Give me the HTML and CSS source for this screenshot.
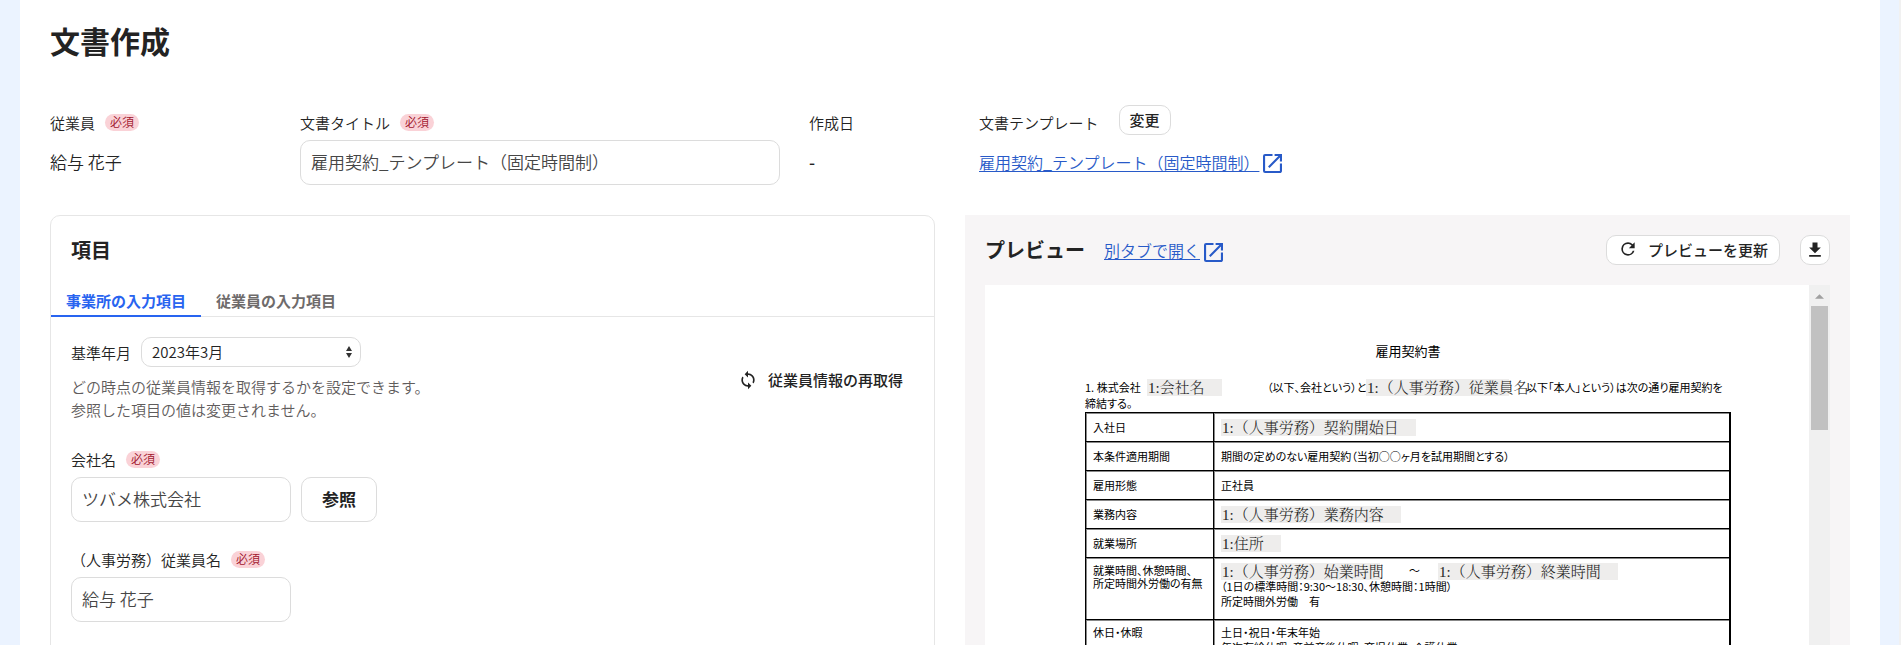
FILE: index.html
```html
<!DOCTYPE html>
<html lang="ja">
<head>
<meta charset="utf-8">
<title>文書作成</title>
<link rel="stylesheet" href="styles.css">
</head>
<body>
<div class="app">
  <main class="page">
    <h1 class="page-title">文書作成</h1>

    <section class="meta">
      <div class="meta-item">
        <div class="label-row"><span class="label">従業員</span><span class="badge">必須</span></div>
        <div class="value">給与 花子</div>
      </div>
      <div class="meta-item">
        <div class="label-row"><label class="label" for="doc-title">文書タイトル</label><span class="badge">必須</span></div>
        <input class="input input-title" id="doc-title" type="text" value="雇用契約_テンプレート（固定時間制）">
      </div>
      <div class="meta-item">
        <div class="label-row"><span class="label">作成日</span></div>
        <div class="value value-date">-</div>
      </div>
      <div class="meta-item">
        <div class="label-row"><span class="label">文書テンプレート</span><button class="button button-small button-change" type="button">変更</button></div>
        <div class="value"><a class="link" href="#template"><span class="link-text">雇用契約_テンプレート（固定時間制）</span><svg class="icon-external" viewBox="3 3 18 18" aria-hidden="true"><path d="M19 19H5V5h7V3H5a2 2 0 0 0-2 2v14a2 2 0 0 0 2 2h14c1.1 0 2-.9 2-2v-7h-2v7zM14 3v2h3.59l-9.83 9.83 1.41 1.41L19 6.41V10h2V3h-7z"/></svg></a></div>
      </div>
    </section>

    <div class="columns">
      <section class="card">
        <h2 class="section-title card-title">項目</h2>
        <div class="tabs" role="tablist">
          <button class="tab tab-active" type="button" role="tab" aria-selected="true">事業所の入力項目</button>
          <button class="tab" type="button" role="tab" aria-selected="false">従業員の入力項目</button>
        </div>
        <div class="card-body">
          <div class="base-row">
            <div>
              <div class="month-row">
                <label class="label" for="base-month">基準年月</label>
                <div class="select-wrap">
                  <select class="select" id="base-month"><option>2023年3月</option></select>
                  <svg class="select-arrows" viewBox="0 0 6 12" aria-hidden="true"><path d="M0 5L3 0l3 5zM0 7h6l-3 5z"/></svg>
                </div>
              </div>
              <p class="help">どの時点の従業員情報を取得するかを設定できます。<br>参照した項目の値は変更されません。</p>
            </div>
            <button class="button-text" type="button"><svg class="icon" viewBox="0 0 24 24" aria-hidden="true"><path d="M12 4V1L8 5l4 4V6c3.31 0 6 2.69 6 6 0 1.01-.25 1.97-.7 2.8l1.46 1.46A7.93 7.93 0 0 0 20 12c0-4.42-3.58-8-8-8zm0 14c-3.31 0-6-2.69-6-6 0-1.01.25-1.97.7-2.8L5.24 7.74A7.93 7.93 0 0 0 4 12c0 4.42 3.58 8 8 8v3l4-4-4-4v3z"/></svg>従業員情報の再取得</button>
          </div>
          <div class="field">
            <div class="label-row"><label class="label" for="company">会社名</label><span class="badge">必須</span></div>
            <div class="field-controls">
              <input class="input" id="company" type="text" value="ツバメ株式会社">
              <button class="button button-large" type="button">参照</button>
            </div>
          </div>
          <div class="field">
            <div class="label-row"><label class="label" for="employee">（人事労務）従業員名</label><span class="badge">必須</span></div>
            <div class="field-controls">
              <input class="input" id="employee" type="text" value="給与 花子">
            </div>
          </div>
        </div>
      </section>

      <section class="preview">
        <header class="preview-head">
          <h2 class="section-title">プレビュー</h2>
          <a class="link" href="#preview"><span class="link-text">別タブで開く</span><svg class="icon-external" viewBox="3 3 18 18" aria-hidden="true"><path d="M19 19H5V5h7V3H5a2 2 0 0 0-2 2v14a2 2 0 0 0 2 2h14c1.1 0 2-.9 2-2v-7h-2v7zM14 3v2h3.59l-9.83 9.83 1.41 1.41L19 6.41V10h2V3h-7z"/></svg></a>
          <div class="preview-actions">
            <button class="button button-small button-refresh" type="button"><svg class="icon" viewBox="0 0 24 24" aria-hidden="true"><path d="M17.65 6.35A7.96 7.96 0 0 0 12 4a8 8 0 1 0 7.73 10h-2.08A6 6 0 1 1 12 6c1.66 0 3.14.69 4.22 1.78L13 11h7V4l-2.35 2.35z"/></svg>プレビューを更新</button>
            <button class="button button-small button-icon" type="button" aria-label="ダウンロード"><svg class="icon" viewBox="0 0 24 24" aria-hidden="true"><path d="M19 9h-4V3H9v6H5l7 7 7-7zM5 18v2h14v-2H5z"/></svg></button>
          </div>
        </header>
        <div class="viewer">
          <article class="document">
            <h3 class="doc-title">雇用契約書</h3>
            <p class="doc-lead"><span class="lead-start">1. 株式会社</span><span class="tag tag-company">1:会社名</span><span class="lead-middle">（以下、会社という）と</span><span class="tag tag-employee">1:（人事労務）従業員名</span><span class="lead-end">以下「本人」という）は次の通り雇用契約を</span></p>
            <p class="doc-lead-rest">締結する。</p>
            <table class="terms">
              <tr><th scope="row">入社日</th><td><span class="tag tag-start">1:（人事労務）契約開始日</span></td></tr>
              <tr><th scope="row">本条件適用期間</th><td>期間の定めのない雇用契約（当初○○ヶ月を試用期間とする）</td></tr>
              <tr><th scope="row">雇用形態</th><td>正社員</td></tr>
              <tr><th scope="row">業務内容</th><td><span class="tag tag-wide">1:（人事労務）業務内容</span></td></tr>
              <tr><th scope="row">就業場所</th><td><span class="tag tag-address">1:住所</span></td></tr>
              <tr class="row-tall"><th scope="row">就業時間、休憩時間、<br>所定時間外労働の有無</th><td>
                <div class="hours"><span class="tag tag-from">1:（人事労務）始業時間</span><span class="hours-to">～</span><span class="tag tag-wide">1:（人事労務）終業時間</span></div>
                <div class="hours-note">（1日の標準時間：9:30～18:30、休憩時間：1時間）</div>
                <div class="hours-extra">所定時間外労働　有</div></td></tr>
              <tr class="row-tall"><th scope="row">休日・休暇</th><td>土日・祝日・年末年始<br>年次有給休暇、産前産後休暇、育児休業、介護休業</td></tr>
            </table>
          </article>
          <div class="scrollbar" aria-hidden="true">
            <svg class="scroll-arrow" viewBox="0 0 10 5"><path d="M0 5l5-5 5 5z"/></svg>
            <div class="scroll-thumb"></div>
          </div>
        </div>
      </section>
    </div>
  </main>
</div>
</body>
</html>
```
FILE: styles.css
```css
* { box-sizing: border-box; }

body {
  margin: 0;
  font-family: "Noto Sans CJK JP", sans-serif;
  font-size: 15px;
  font-weight: 350;
  color: #232323;
}

h1, h2, h3, p { margin: 0; }
button, input, select { font: inherit; color: inherit; }
button { cursor: pointer; }

.app {
  height: 100vh;
  overflow: hidden;
  padding: 0 19px 0 20px;
  background: #ebf3ff;
  border-right: 2px solid #f1f1f1;
}

.page {
  min-height: 100%;
  padding: 19px 30px 0;
  background: #fff;
}

.page-title {
  font-size: 30px;
  line-height: 42px;
  font-weight: 700;
  color: #232323;
}

.meta {
  display: grid;
  grid-template-columns: 250px 509px 170px 1fr;
  margin-top: 44px;
}

.label-row {
  display: flex;
  align-items: center;
  gap: 10px;
  height: 35px;
}

.badge {
  height: 17px;
  padding: 0 5px;
  border-radius: 9px;
  background: #fad2d7;
  color: #a0142d;
  font-size: 12px;
  line-height: 16px;
}

.value {
  display: flex;
  align-items: center;
  height: 45px;
  padding-bottom: 2px;
  font-size: 17px;
}

.value-date { font-weight: 500; }

.input {
  width: 220px;
  height: 45px;
  padding: 0 10px 2px;
  border: 1px solid #dcdcdc;
  border-radius: 10px;
  background: #fff;
  font-size: 17px;
  color: #464646;
}

.input-title { width: 480px; }

.button {
  display: flex;
  align-items: center;
  justify-content: center;
  border: 1px solid #dcdcdc;
  border-radius: 10px;
  background: #fff;
  font-weight: 700;
}

.button-small { height: 30px; padding: 0 10px 2px; }
.button-change { align-self: flex-start; margin-left: 10px; font-weight: 500; }
.button-large { height: 45px; padding: 0 20px 3px; font-size: 17px; }
.button-refresh { padding: 0 11px 2px; gap: 10px; font-weight: 500; }
.button-icon { width: 30px; padding: 0; }

.icon {
  width: 20px;
  height: 20px;
  fill: currentColor;
}

.link {
  display: inline-flex;
  align-items: center;
  gap: 4px;
  color: #285ac8;
  font-size: 16px;
  text-decoration: none;
}

.link-text {
  text-decoration: underline;
  text-underline-offset: 2px;
}

.icon-external {
  width: 19px;
  height: 19px;
  margin-top: 4px;
  fill: currentColor;
}

.columns {
  display: grid;
  grid-template-columns: 1fr 1fr;
  gap: 30px;
  margin-top: 30px;
}

.section-title {
  font-size: 20px;
  line-height: 30px;
  font-weight: 700;
  color: #232323;
}

.card {
  border: 1px solid #e6e6e6;
  border-radius: 10px;
  padding: 19px 0 50px;
}

.card-title { padding: 0 20px; }

.tabs {
  display: flex;
  margin-top: 20px;
  box-shadow: inset 0 -1px #e6e6e6;
}

.tab {
  height: 32px;
  padding: 0 15px;
  border: 0;
  border-bottom: 2px solid transparent;
  background: none;
  font-weight: 700;
  color: #6e6b6b;
}

.tab-active {
  border-bottom-color: #2864f0;
  color: #2864f0;
}

.card-body { padding: 20px; }

.base-row {
  display: flex;
  align-items: center;
  justify-content: space-between;
}

.month-row {
  display: flex;
  align-items: center;
  gap: 10px;
}

.select-wrap { position: relative; }

.select {
  display: block;
  width: 220px;
  height: 30px;
  padding: 0 10px 2px;
  appearance: none;
  border: 1px solid #dcdcdc;
  border-radius: 10px;
  background: #fff;
}

.select-arrows {
  position: absolute;
  right: 9px;
  top: 9px;
  width: 6px;
  height: 12px;
  fill: #323232;
  pointer-events: none;
}

.help {
  margin: 8px 0 1px;
  line-height: 23px;
  color: #5f5c5c;
}

.button-text {
  display: flex;
  align-items: center;
  gap: 10px;
  padding: 5px 11px;
  border: 0;
  background: none;
  font-weight: 500;
}

.field { margin-top: 20px; }
.field-controls { display: flex; gap: 10px; }

.preview {
  display: flex;
  flex-direction: column;
  padding: 20px 20px 0;
  background: #f7f5f6;
}

.preview-head {
  display: flex;
  align-items: center;
  height: 30px;
}

.preview-head .link { margin-left: 19px; }

.preview-actions {
  display: flex;
  gap: 20px;
  margin-left: auto;
}

.viewer {
  display: flex;
  flex: 1;
  margin-top: 20px;
  background: #fff;
}

.document {
  flex: 1;
  min-width: 0;
  padding: 56px 78px 0 100px;
  font-size: 11px;
  font-weight: 400;
  font-feature-settings: "palt";
  color: #000;
}

.doc-title {
  font-size: 13px;
  line-height: 20px;
  font-weight: 400;
  text-align: center;
}

.doc-lead {
  display: flex;
  align-items: center;
  height: 18px;
  margin-top: 17px;
  white-space: nowrap;
}

.doc-lead-rest { line-height: 15px; }
.lead-start { width: 62px; }
.lead-middle { width: 99px; }
.lead-end { margin-left: 17px; }

.tag {
  display: inline-block;
  height: 17px;
  padding-left: 1px;
  background: #eeedec;
  font-family: "Liberation Serif", "Noto Serif CJK JP", "Noto Sans CJK JP", serif;
  font-size: 15px;
  line-height: 18px;
  font-weight: 300;
  font-feature-settings: normal;
  white-space: nowrap;
  vertical-align: middle;
  color: #232323;
}

.tag-company { width: 75px; margin-right: 45px; }
.tag-employee { width: 143px; }
.tag-start { width: 195px; }
.tag-wide { width: 180px; }
.tag-address { width: 60px; }
.tag-from { width: 159px; }

.terms {
  width: 100%;
  margin-top: 1px;
  border-collapse: collapse;
  border-right: 2px solid #000;
  line-height: 13px;
}

.terms th,
.terms td {
  height: 29px;
  padding: 0 7px;
  border: 1px solid #000;
  box-shadow: inset 1px 1px #888;
  text-align: left;
  font-weight: 400;
}

.terms th { width: 128px; white-space: nowrap; }

.terms .row-tall th,
.terms .row-tall td {
  height: 62px;
  padding-top: 6px;
  vertical-align: top;
}

.terms .row-tall td { line-height: 15px; padding-top: 5px; }

.hours {
  display: flex;
  height: 17px;
}

.hours-to { width: 58px; padding-left: 29px; }
.hours-note { line-height: 13px; }
.hours-extra { line-height: 17px; }

.scrollbar {
  width: 21px;
  padding: 9px 2px 0;
  background: #f0f0f0;
}

.scroll-arrow {
  display: block;
  width: 9px;
  height: 5px;
  margin: 0 auto 7px;
  fill: #a0a0a0;
}

.scroll-thumb {
  height: 124px;
  background: #c1c1c1;
}
```
